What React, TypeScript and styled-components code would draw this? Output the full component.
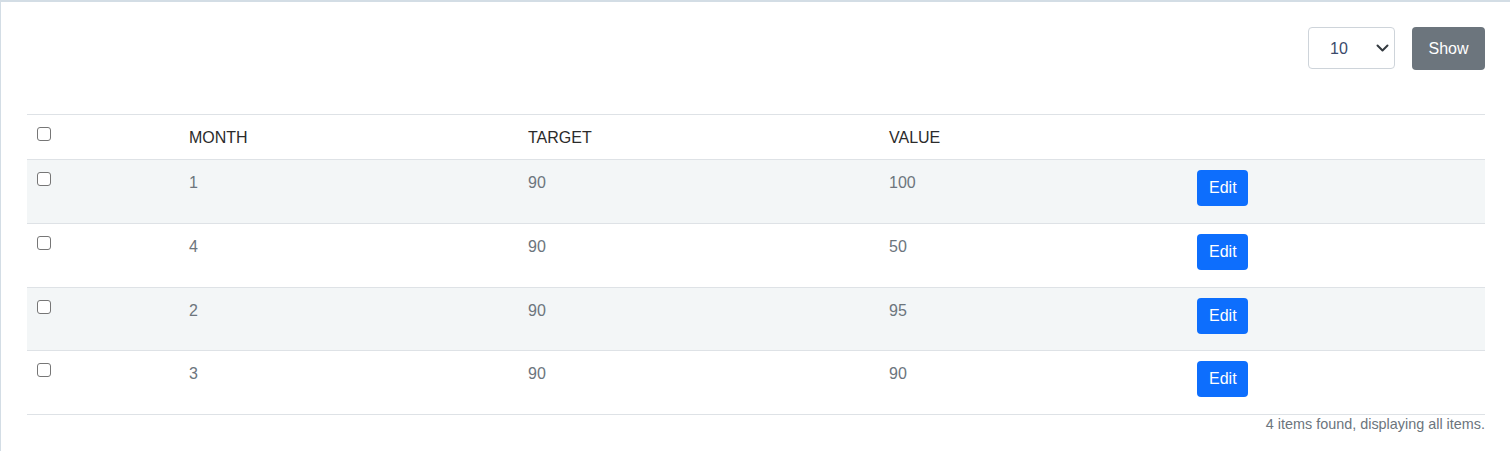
import React from "react";
import styled, { createGlobalStyle } from "styled-components";

const GlobalStyle = createGlobalStyle`
  html, body { margin: 0; padding: 0; }
  body {
    background: #d3dde5;
    font-family: "Liberation Sans", Arial, sans-serif;
    font-size: 16px;
    color: #212529;
  }
`;

const Page = styled.div`
  padding: 2px 0 0 1px;
  min-height: 449px;
`;

const Card = styled.div`
  background: #ffffff;
  padding: 25px 25px 24px 26px;
  min-height: 400px;
`;

const Toolbar = styled.div`
  display: flex;
  justify-content: flex-end;
  align-items: flex-start;
  gap: 17px;
  margin-bottom: 44px;
`;

const SelectWrap = styled.div`
  position: relative;
  width: 87px;
  height: 42px;
`;

const Select = styled.select`
  appearance: none;
  -webkit-appearance: none;
  width: 87px;
  height: 42px;
  box-sizing: border-box;
  border: 1px solid #ced4da;
  border-radius: 4px;
  background: #ffffff;
  padding: 0 0 0 21px;
  font-family: "Liberation Sans", Arial, sans-serif;
  font-size: 16px;
  color: #3b4a6b;
  outline: none;
`;

const Chevron = styled.svg`
  position: absolute;
  right: 6px;
  top: 17px;
  width: 13px;
  height: 8px;
  pointer-events: none;
`;

const Button = styled.button<{ $variant: "primary" | "secondary" }>`
  border: none;
  border-radius: 4px;
  font-family: "Liberation Sans", Arial, sans-serif;
  font-size: 16px;
  line-height: 24px;
  color: #ffffff;
  background: ${(p) => (p.$variant === "primary" ? "#0d6efd" : "#6c757d")};
  padding: ${(p) => (p.$variant === "primary" ? "6px 12px" : "0")};
  width: ${(p) => (p.$variant === "primary" ? "51px" : "73px")};
  height: ${(p) => (p.$variant === "primary" ? "36px" : "43px")};
  cursor: pointer;
  display: inline-block;
`;

const Table = styled.table`
  width: 100%;
  border-collapse: collapse;
  table-layout: fixed;
`;

const HeadRow = styled.tr`
  border-top: 1px solid #dee2e6;
  border-bottom: 1px solid #dee2e6;
`;

const Th = styled.th`
  text-align: left;
  font-weight: 400;
  padding: 11px 8px 9px;
  line-height: 24px;
  color: #2b2b2b;
  vertical-align: top;
`;

const Row = styled.tr<{ $striped: boolean }>`
  background: ${(p) => (p.$striped ? "#f3f6f7" : "#ffffff")};
  border-bottom: 1px solid #dee2e6;
`;

const Td = styled.td`
  padding: 11px 8px;
  height: 40.75px;
  line-height: 24px;
  color: #6c757d;
  vertical-align: top;
`;

const ActionTd = styled(Td)`
  padding-top: 10px;
`;

const Check = styled.input`
  appearance: none;
  -webkit-appearance: none;
  box-sizing: border-box;
  margin: 1px 0 0 2px;
  width: 14px;
  height: 14px;
  border: 1px solid #767676;
  border-radius: 3px;
  background: #ffffff;
  vertical-align: top;
`;

const Footer = styled.div`
  text-align: right;
  font-size: 14.4px;
  line-height: 18px;
  color: #6c757d;
`;

const rows = [
  { month: 1, target: 90, value: 100 },
  { month: 4, target: 90, value: 50 },
  { month: 2, target: 90, value: 95 },
  { month: 3, target: 90, value: 90 },
];

export default function App() {
  return (
    <>
      <GlobalStyle />
      <Page>
        <Card>
          <Toolbar>
            <SelectWrap>
              <Select defaultValue="10">
                <option value="10">10</option>
                <option value="25">25</option>
                <option value="50">50</option>
              </Select>
              <Chevron viewBox="0 0 13 8">
                <path
                  d="M1.5 1.5l5 5 5-5"
                  fill="none"
                  stroke="#343a40"
                  strokeWidth="2"
                  strokeLinecap="round"
                  strokeLinejoin="round"
                />
              </Chevron>
            </SelectWrap>
            <Button $variant="secondary">Show</Button>
          </Toolbar>
          <Table>
            <colgroup>
              <col style={{ width: 154 }} />
              <col style={{ width: 339 }} />
              <col style={{ width: 361 }} />
              <col style={{ width: 308 }} />
              <col />
            </colgroup>
            <thead>
              <HeadRow>
                <Th>
                  <Check type="checkbox" />
                </Th>
                <Th>MONTH</Th>
                <Th>TARGET</Th>
                <Th>VALUE</Th>
                <Th />
              </HeadRow>
            </thead>
            <tbody>
              {rows.map((r, i) => (
                <Row key={i} $striped={i % 2 === 0}>
                  <Td>
                    <Check type="checkbox" />
                  </Td>
                  <Td>{r.month}</Td>
                  <Td>{r.target}</Td>
                  <Td>{r.value}</Td>
                  <ActionTd>
                    <Button $variant="primary">Edit</Button>
                  </ActionTd>
                </Row>
              ))}
            </tbody>
          </Table>
          <Footer>4 items found, displaying all items.</Footer>
        </Card>
      </Page>
    </>
  );
}
